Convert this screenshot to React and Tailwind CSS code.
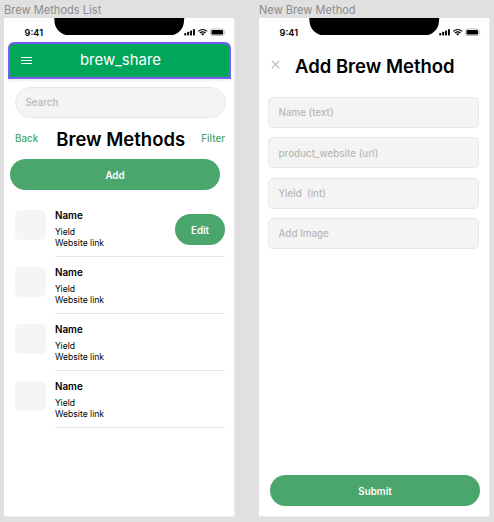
import React from "react";

function StatusBar() {
  return (
    <div className="flex h-6 shrink-0 items-start">
      <div className="w-[50px] pt-[8px] pl-[20.5px] text-[9.2px] leading-[13px] font-semibold">9:41</div>
      <svg className="h-[17.4px] w-[131px]" viewBox="0 0 131 17.4">
        <path d="M0 0H130.500C130.200 .4 130.100 1 130.100 2C130.100 11 124 17.4 115.500 17.4H15.5C7 17.4 .4 11 .4 2C.4 1 .3 .4 0 0Z" fill="#000" />
      </svg>
      <svg className="-ml-[5px] h-6 w-[53px]" viewBox="0 0 53 24">
        <g fill="#000">
          <rect x="4.300" y="14.9" width="1.900" height="2.5" rx=".4" />
          <rect x="7.200" y="13.8" width="1.900" height="3.600" rx=".4" />
          <rect x="10.100" y="12.500" width="1.900" height="4.900" rx=".4" />
          <rect x="13" y="11.100" width="1.900" height="6.300" rx=".4" />
          <path d="M22.700 17.600L21.100 15.900Q22.700 14.600 24.300 15.900Z" />
        </g>
        <g fill="none" stroke="#000" strokeWidth="1.200">
          <path d="M18.300 13.400Q22.700 9.600 27.100 13.400" />
          <path d="M19.900 15Q22.700 12.600 25.500 15" />
        </g>
        <rect x="30.600" y="11" width="13.400" height="6.500" rx="1.700" fill="none" stroke="#000" strokeOpacity=".38" strokeWidth=".7" />
        <rect x="31.600" y="11.900" width="11.400" height="4.700" rx=".9" fill="#000" />
        <path d="M44.700 13Q46.100 14.200 44.700 15.500Z" fill="#000" fillOpacity=".4" />
      </svg>
    </div>
  );
}

function Frame({ title, children }) {
  return (
    <section className="w-[230px]">
      <h2 className="h-[18px] pt-[2px] text-[11.1px] leading-[16px] whitespace-nowrap text-[#8c8c8c]">{title}</h2>
      <div className="flex h-[498px] w-[230px] flex-col bg-white shadow-[1px_1px_0_#ececec]">{children}</div>
    </section>
  );
}

function BrewRow({ editable }) {
  return (
    <li className="flex h-[57px] pl-[11px]">
      <div className="mt-[9.5px] h-[30.5px] w-[30.5px] shrink-0 rounded-[5px] bg-[#f5f5f5]" />
      <div className="ml-[9.5px] flex w-[170px] justify-between border-b border-[#e8e8e8]">
        <div className="pt-[9px]">
          <h3 className="text-[9.8px] leading-[13px] font-semibold">Name</h3>
          <p className="mt-[5px] text-[8.6px] leading-[10.600px]">Yield</p>
          <p className="text-[8.6px] leading-[10.600px]">Website link</p>
        </div>
        {editable && (
          <button className="mt-[14px] h-[31px] w-[50px] rounded-full bg-[#4aa66c] pt-[3px] text-[9.8px] font-semibold text-white">Edit</button>
        )}
      </div>
    </li>
  );
}

function Field({ label }) {
  return (
    <div className="flex h-[31px] items-center rounded-[5px] border border-[#e8e8e8] bg-[#f4f4f4] pt-[2px] pl-[9.5px] text-[9.8px] font-medium whitespace-pre text-[#b8b8b8]">
      {label}
    </div>
  );
}

export default function App() {
  return (
    <main className="flex h-[522px] w-[494px] gap-[25px] overflow-hidden bg-[#e0e0e0] pl-1 font-[Inter,sans-serif] text-black">
      <Frame title="Brew Methods List">
        <StatusBar />
        <header className="ml-1 flex h-[37px] w-[223px] shrink-0 items-center rounded-t-[6px] border-2 border-[#775cf5] bg-[#00a65a] pl-[11px] text-white shadow-[0_2px_3px_#00000012]">
          <svg className="h-[11px] w-[11px]" viewBox="0 0 11 11" stroke="#fff" strokeWidth="1">
            <path d="M0 2.500H11M0 5.500H11M0 8.500H11" />
          </svg>
          <span className="ml-[48px] -mt-[2px] text-[14.9px] leading-[18px]">brew_share</span>
        </header>
        <div className="mt-[8px] ml-[11px] flex h-[31px] w-[211px] shrink-0 items-center rounded-full border border-[#e8e8e8] bg-[#f4f4f4] pt-[2px] pl-[9.5px] text-[9.8px] font-medium text-[#b8b8b8]">
          Search
        </div>
        <div className="mt-[9px] flex h-[24px] w-[221px] shrink-0 items-center justify-between pl-[11px] text-[9.8px] font-medium text-[#4aa66c]">
          <span>Back</span>
          <h1 className="ml-[2px] text-[18.5px] leading-[24px] font-semibold text-black">Brew Methods</h1>
          <span>Filter</span>
        </div>
        <button className="mt-[8px] ml-[6px] h-[31px] w-[210px] shrink-0 rounded-full bg-[#4aa66c] pt-[3px] text-[9.8px] font-semibold text-white">Add</button>
        <ul className="mt-[10px]">
          <BrewRow editable />
          <BrewRow />
          <BrewRow />
          <BrewRow />
        </ul>
      </Frame>
      <Frame title="New Brew Method">
        <StatusBar />
        <div className="mt-[12px] flex h-[24px] shrink-0 items-center pl-[12px]">
          <svg className="-mt-[3px] h-[9px] w-[9px]" viewBox="0 0 9 9" stroke="#b5b5b5" strokeWidth="1.1">
            <path d="M.7 .7L8.300 8.300M8.300 .7L.7 8.300" />
          </svg>
          <h1 className="ml-[15px] text-[18.5px] leading-[24px] font-semibold whitespace-nowrap">Add Brew Method</h1>
        </div>
        <div className="mt-[19px] ml-[9px] flex w-[211px] flex-col gap-[9.400px]">
          <Field label="Name (text)" />
          <Field label="product_website (url)" />
          <Field label="Yield  (int)" />
          <Field label="Add Image" />
        </div>
        <button className="mt-auto mb-[10px] ml-[11px] h-[31px] w-[210px] shrink-0 rounded-full bg-[#4aa66c] pt-[3px] text-[9.8px] font-semibold text-white">Submit</button>
      </Frame>
    </main>
  );
}
